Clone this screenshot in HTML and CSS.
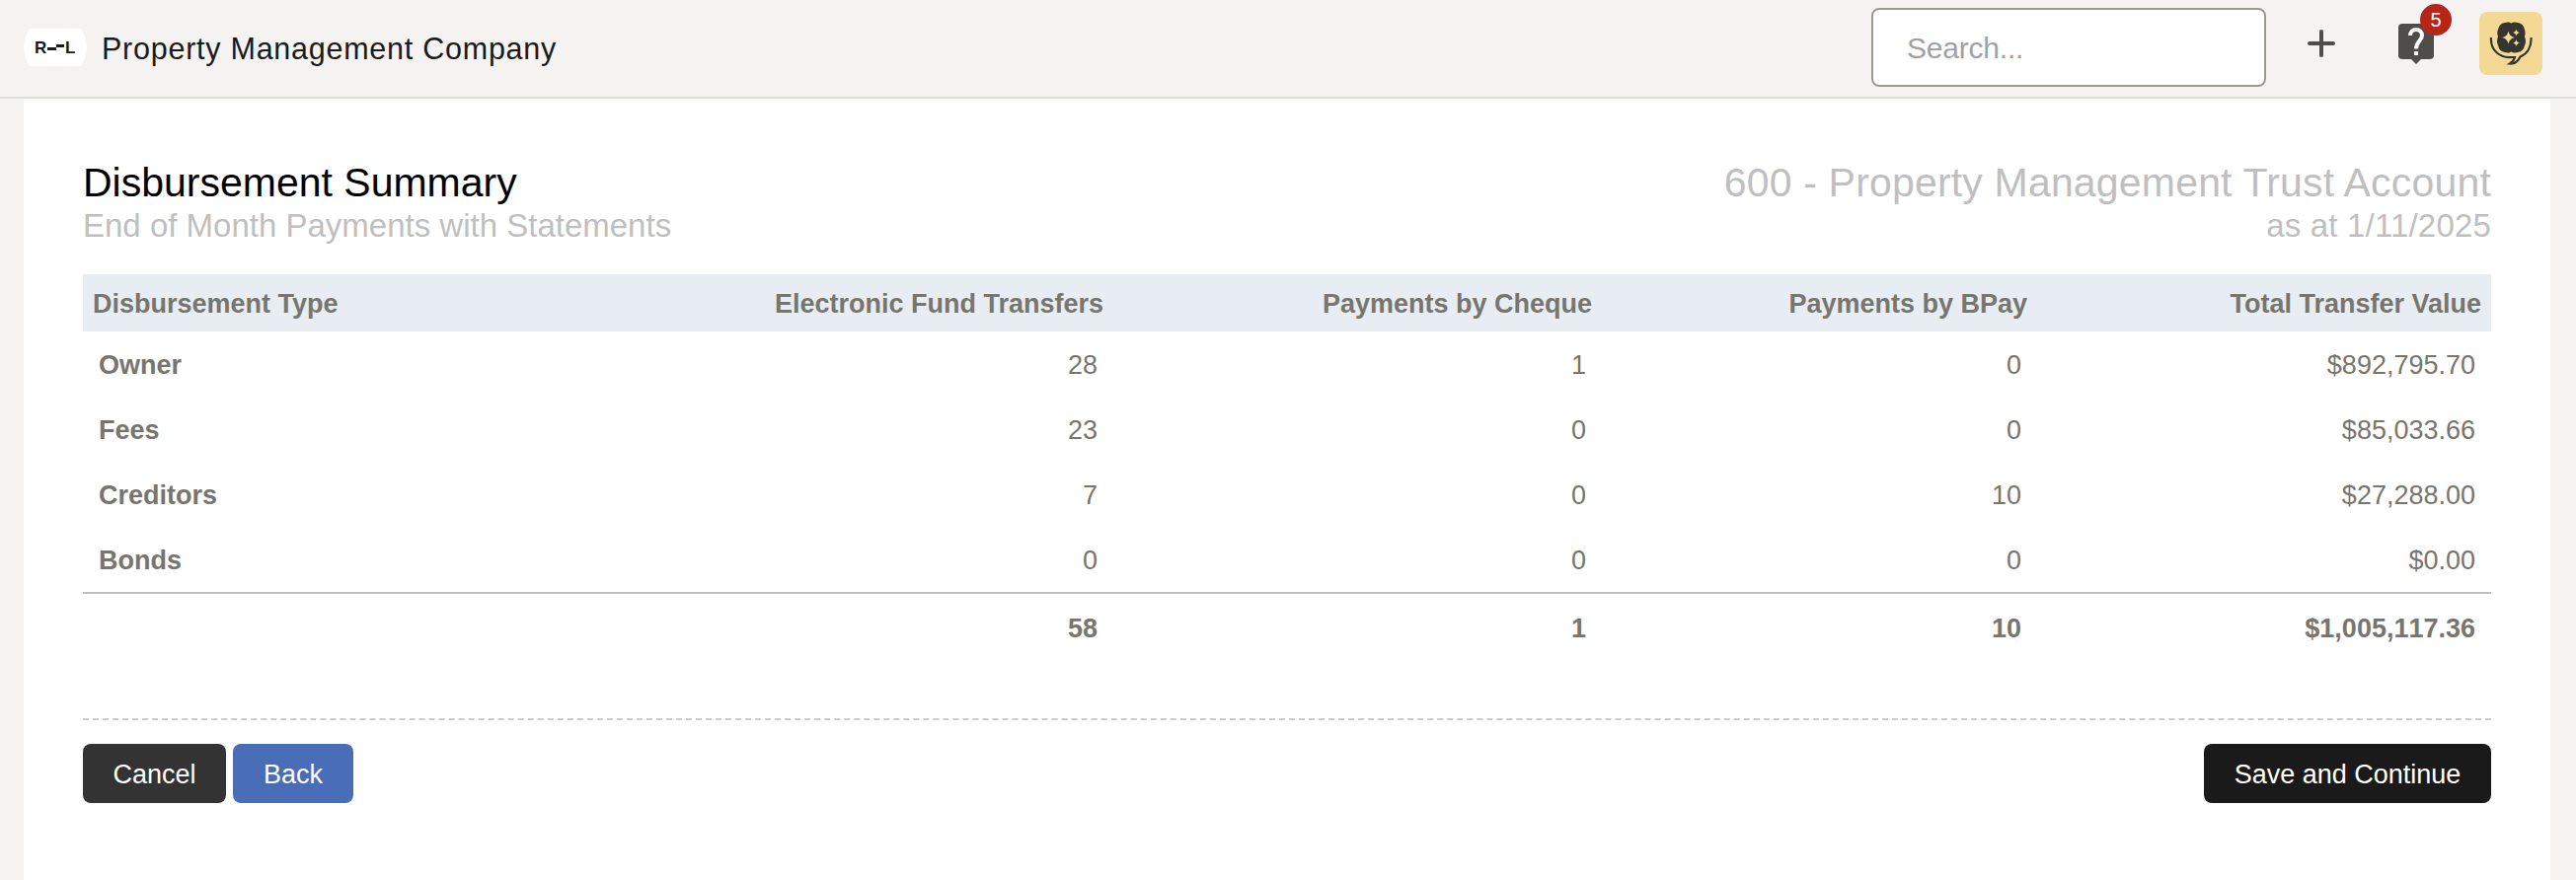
FILE: index.html
```html
<!DOCTYPE html>
<html lang="en">
<head>
  <meta charset="UTF-8">
  <title>Disbursement Summary</title>
  <link rel="stylesheet" href="styles.css">
</head>
<body>
  <header class="topbar">
    <div class="brand">
      <svg class="logo" width="64" height="38" viewBox="0 0 64 38">
        <path d="M6 0H58Q64 8 64 19T58 38H6Q0 30 0 19T6 0Z" fill="#fff"/>
        <text x="11" y="25" class="logo-text">R</text>
        <rect x="24" y="19" width="9" height="3" fill="#1a1a1a"/>
        <rect x="33" y="16" width="8" height="3" fill="#1a1a1a"/>
        <text x="42" y="25" class="logo-text">L</text>
      </svg>
      <span class="company">Property Management Company</span>
    </div>
    <div class="tools">
      <input type="text" class="search" placeholder="Search...">
      <button class="icon-btn add-btn" aria-label="Add">
        <svg width="28" height="28" viewBox="0 0 28 28">
          <path d="M14 2V26M2 14H26" stroke="#4f4d49" stroke-width="4" stroke-linecap="round"/>
        </svg>
      </button>
      <button class="icon-btn help-btn" aria-label="Help">
        <svg width="36" height="41" viewBox="0 0 36 41">
          <path d="M4 0H32Q36 0 36 4V32Q36 36 32 36H23L18 41L13 36H4Q0 36 0 32V4Q0 0 4 0Z" fill="#4f4d49"/>
          <path d="M12 12C12 8.500 14.500 6 18 6S24 8.500 24 12C24 17 18 18 18 25.500" fill="none" stroke="#fff" stroke-width="4"/>
          <rect x="16" y="28" width="4" height="4" fill="#fff"/>
        </svg>
        <span class="badge">5</span>
      </button>
      <button class="icon-btn assistant-btn" aria-label="Assistant">
        <svg width="64" height="64" viewBox="0 0 64 64">
          <path d="M26 11Q30 10 32.500 11.500Q35 10 39 11Q45 12 46 18Q47 21 46 25Q48 30 46 34Q45 40 39 41Q35 42 32.500 40.500Q30 42 26 41Q20 40 19 34Q17 30 19 25Q17.500 21 19 18Q20 12 26 11Z" fill="#37352f"/>
          <path d="M29.500 19.500Q30.500 25 36 26Q30.500 27 29.500 32.500Q28.500 27 23 26Q28.500 25 29.500 19.500ZM37.500 17.500Q38 20.500 41 21Q38 21.500 37.500 24.500Q37 21.500 34 21Q37 20.500 37.500 17.500ZM37.500 28Q38 31 41 31.500Q38 32 37.500 35Q37 32 34 31.500Q37 31 37.500 28Z" fill="#f3d995"/>
          <path d="M12 26C11 39 21 47 33 46L36 46Q35 50 31 52.500Q38 53 41.500 45.500C49 42.500 53 35 52.500 26" fill="none" stroke="#37352f" stroke-width="2.200"/>
        </svg>
      </button>
    </div>
  </header>

  <main class="card">
    <div class="card-header">
      <div class="heading">
        <h1>Disbursement Summary</h1>
        <h2>End of Month Payments with Statements</h2>
      </div>
      <div class="heading heading-right">
        <h1>600 - Property Management Trust Account</h1>
        <h2>as at 1/11/2025</h2>
      </div>
    </div>

    <table class="summary">
      <colgroup>
        <col class="col-type"><col class="col-eft"><col class="col-cheque"><col class="col-bpay"><col class="col-total">
      </colgroup>
      <thead>
        <tr><th>Disbursement Type</th><th>Electronic Fund Transfers</th><th>Payments by Cheque</th><th>Payments by BPay</th><th>Total Transfer Value</th></tr>
      </thead>
      <tbody>
        <tr><th>Owner</th><td>28</td><td>1</td><td>0</td><td>$892,795.70</td></tr>
        <tr><th>Fees</th><td>23</td><td>0</td><td>0</td><td>$85,033.66</td></tr>
        <tr><th>Creditors</th><td>7</td><td>0</td><td>10</td><td>$27,288.00</td></tr>
        <tr><th>Bonds</th><td>0</td><td>0</td><td>0</td><td>$0.00</td></tr>
      </tbody>
      <tfoot>
        <tr><td></td><td>58</td><td>1</td><td>10</td><td>$1,005,117.36</td></tr>
      </tfoot>
    </table>

    <div class="actions">
      <button class="btn btn-cancel">Cancel</button>
      <button class="btn btn-back">Back</button>
      <button class="btn btn-save">Save and Continue</button>
    </div>
  </main>
</body>
</html>
```
FILE: styles.css
```css
* {
  box-sizing: border-box;
}
body {
  margin: 0;
  min-height: 892px;
  display: flex;
  flex-direction: column;
  background-color: #f4f3f1;
  color: #77766e;
  font-family: "Liberation Sans", Arial, sans-serif;
  font-size: 27px;
}
button, input {
  font-family: inherit;
}
.topbar {
  display: flex;
  justify-content: space-between;
  height: 100px;
  padding: 0 34px 0 24px;
  border-bottom: 2px solid #dfdedb;
}
.brand {
  display: flex;
  align-items: center;
  gap: 15px;
}
.logo {
  margin-top: -2px;
}
.logo-text {
  font-size: 17px;
  font-weight: bold;
  fill: #1a1a1a;
}
.company {
  color: #1a1a1a;
  font-size: 30.5px;
  letter-spacing: 0.75px;
}
.tools {
  display: flex;
  align-items: flex-start;
}
.search {
  width: 400px;
  height: 80px;
  margin: 8px 42px 0 0;
  padding: 2px 34px 0;
  border: 2px solid #9b9a92;
  border-radius: 8px;
  background-color: #fff;
  font-size: 30px;
  letter-spacing: -0.2px;
}
.search::placeholder {
  color: #a1a1a1;
}
.icon-btn {
  position: relative;
  display: block;
  padding: 0;
  border: 0;
  background: none;
}
.icon-btn svg {
  display: block;
}
.add-btn {
  margin: 30px 64px 0 0;
}
.help-btn {
  margin: 24px 46px 0 0;
}
.badge {
  position: absolute;
  top: -20px;
  left: 22px;
  width: 32px;
  height: 32px;
  border-radius: 50%;
  background-color: #b72418;
  color: #fff;
  font-size: 20px;
  line-height: 32px;
}
.assistant-btn {
  margin-top: 12px;
  border-radius: 8px;
  background-color: #f3d995;
}
.card {
  flex: 1;
  margin: 0 26px 0 24px;
  padding: 60px;
  background-color: #fff;
}
.card-header {
  display: flex;
  justify-content: space-between;
  height: 118px;
}
.heading h1, .heading h2 {
  margin: 0;
  color: #bfbfbf;
  font-weight: normal;
}
.heading h1 {
  font-size: 41px;
  line-height: 50px;
}
.heading h2 {
  font-size: 33px;
  line-height: 38px;
}
.heading:first-child h1 {
  color: #000;
}
.heading-right {
  text-align: right;
  letter-spacing: 0.18px;
}
.summary {
  width: 100%;
  table-layout: fixed;
  border-collapse: separate;
  border-spacing: 0;
}
.col-type {
  width: 562px;
}
.col-eft {
  width: 482px;
}
.col-cheque {
  width: 495px;
}
.col-bpay {
  width: 441px;
}
.summary th, .summary td {
  height: 66px;
  padding: 2px 16px 0;
  text-align: right;
  white-space: nowrap;
}
.summary th:first-child {
  text-align: left;
}
.summary thead th {
  height: 58px;
  padding: 2px 10px 0;
  background-color: #e8edf4;
}
.summary tfoot td {
  height: 70px;
  border-top: 2px solid #bfbfbf;
  font-weight: bold;
  font-kerning: none;
}
.actions {
  display: flex;
  gap: 7px;
  margin-top: 58px;
  padding-top: 24px;
  border-top: 2px dashed #ccc;
}
.btn {
  height: 60px;
  padding: 2px 0 0;
  border: 0;
  border-radius: 8px;
  color: #fff;
  font-size: 27px;
}
.btn-cancel {
  width: 145px;
  background-color: #333;
}
.btn-back {
  width: 122px;
  background-color: #4a6db8;
}
.btn-save {
  width: 291px;
  margin-left: auto;
  background-color: #1a1a1a;
}
```
